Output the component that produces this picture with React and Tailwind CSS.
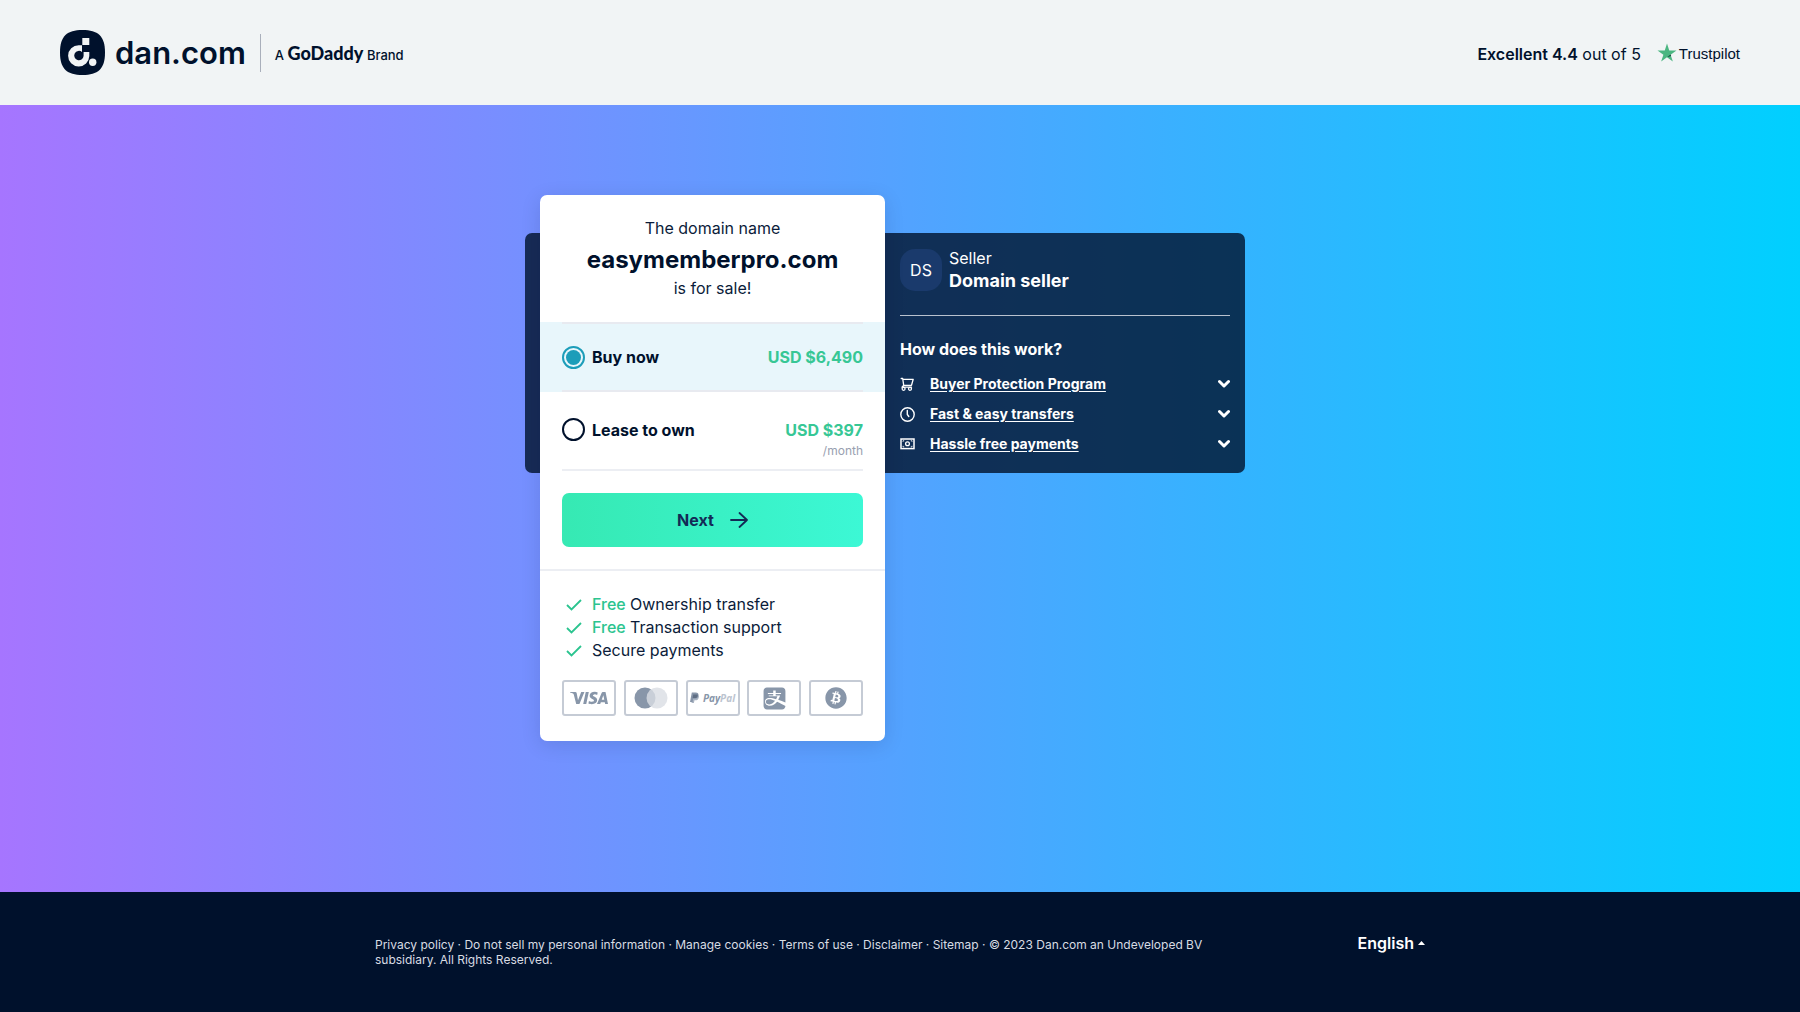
import { Fragment, useState } from "react";
import { FaAlipay, FaBitcoin } from "react-icons/fa6";
import { SiVisa } from "react-icons/si";

function DanMark() {
  return (
    <svg viewBox="0 0 45 45" className="size-[45px]" aria-hidden="true">
      <path
        d="M22.5 0C38 0 45 6 45 22.500C45 39 38 45 22.500 45C7 45 0 39 0 22.500C0 6 7 0 22.500 0Z"
        fill="#00112c"
      />
      <path d="M22 15.200V22A4.700 4.700 0 1 0 23.600 26V22H29.300V26A10.600 10.600 0 1 1 18.700 15.200Z" fill="#f1f4f5" />
      <path d="M22.300 8h7v7h-7z" fill="#f1f4f5" />
      <circle cx="32.700" cy="32.300" r="3.700" fill="#f1f4f5" />
    </svg>
  );
}

function Star() {
  return (
    <svg viewBox="0 0 20 20" className="size-[20px]" aria-hidden="true">
      <path d="M10 .5l2.250 6.900h7.250l-5.900 4.250 2.250 6.900L10 14.300l-5.850 4.250 2.250-6.900L.5 7.400h7.250z" fill="#4bb681" />
      <path d="M14.100 13.100l-.5-1.500-3.600 2.700z" fill="#17413f" />
    </svg>
  );
}

function Chevron() {
  return (
    <svg viewBox="0 0 12 10" className="w-3 h-[10px]" fill="none" stroke="currentColor" strokeWidth="3" strokeLinecap="round" strokeLinejoin="round" aria-hidden="true">
      <path d="M1.500 2.500l4.500 4.500 4.500-4.500" />
    </svg>
  );
}

function Cart() {
  return (
    <svg viewBox="0 0 15 15" className="size-[15px]" fill="none" stroke="currentColor" strokeWidth="1.300" strokeLinejoin="round" strokeLinecap="round" aria-hidden="true">
      <path d="M1.200 1.500h1.500l1 6.800h7.800l1.700-6H2.900M3.700 8.300L2 10.200h9.500" />
      <circle cx="3.600" cy="11.800" r="1.500" />
      <circle cx="10" cy="11.800" r="1.500" />
    </svg>
  );
}

function Clock() {
  return (
    <svg viewBox="0 0 15 15" className="size-[15px]" fill="none" stroke="currentColor" strokeWidth="1.400" strokeLinecap="round" aria-hidden="true">
      <circle cx="7.500" cy="7.500" r="6.700" />
      <path d="M7.300 3.500v4l1.500 2" />
    </svg>
  );
}

function Banknote() {
  return (
    <svg viewBox="0 0 15 15" className="size-[15px]" fill="none" stroke="currentColor" aria-hidden="true">
      <rect x="1" y="2" width="13" height="9.600" strokeWidth="1.500" />
      <circle cx="7.500" cy="6.800" r="1.900" strokeWidth="1.300" />
      <path d="M3 4.800V3.700h1.200M12 4.800V3.700h-1.200M3 8.800v1.100h1.200M12 8.800v1.100h-1.200" strokeWidth=".8" />
    </svg>
  );
}

function Check() {
  return (
    <svg viewBox="0 0 16 12" className="w-4 h-3" fill="none" stroke="#2bc48f" strokeWidth="1.800" aria-hidden="true">
      <path d="M1 6l4.500 4.500L15 1" />
    </svg>
  );
}

function Arrow() {
  return (
    <svg viewBox="0 0 18 16" className="w-[18px] h-4" fill="none" stroke="currentColor" strokeWidth="1.800" strokeLinecap="round" strokeLinejoin="round" aria-hidden="true">
      <path d="M1 8h16M9.500 1l7.500 7-7.500 7" />
    </svg>
  );
}

function PayPal() {
  return (
    <span className="flex items-center gap-1" aria-label="PayPal">
      <svg viewBox="0 0 9 12" className="w-[9px] h-3" aria-hidden="true">
        <path d="M1.800.5h3.900c2 0 3.100 1.200 2.800 3C8.200 5.600 6.800 6.700 4.800 6.700H3.200L2.600 10H0z" fill="#8896a9" />
        <path d="M3 3h4.500c1.300.4 1.600 1.300 1.300 2.400C8.400 7.400 7.200 8.200 5.400 8.200h-.9L3.900 11H1.500z" fill="#8896a9" opacity=".7" />
        <path d="M3.200 2.400h4.500c.3 2.200-.9 3.700-3 3.700H2.600z" fill="#5f6e84" />
      </svg>
      <span className="font-['Open_Sans'] text-[10px] leading-3 font-bold italic text-[#8896a9]">
        Pay<span className="text-[#bcc4cf]">Pal</span>
      </span>
    </span>
  );
}

const payments = [
  ["Visa", <SiVisa key="v" className="size-[38px]" />],
  [
    "Mastercard",
    <svg key="m" viewBox="0 0 34 22" className="w-[34px] h-[22px]" aria-hidden="true">
      <circle cx="11" cy="11" r="10.500" fill="#8896a9" />
      <circle cx="23" cy="11" r="10.500" fill="#d9dde3" opacity=".8" />
    </svg>,
  ],
  ["PayPal", <PayPal key="p" />],
  ["Alipay", <FaAlipay key="a" className="size-[25px]" />],
  ["Bitcoin", <FaBitcoin key="b" className="size-[22px]" />],
];

const topics = [
  ["Buyer Protection Program", Cart],
  ["Fast & easy transfers", Clock],
  ["Hassle free payments", Banknote],
];

const perks = [
  [true, "Ownership transfer"],
  [true, "Transaction support"],
  [false, "Secure payments"],
];

const legal = ["Privacy policy", "Do not sell my personal information", "Manage cookies", "Terms of use", "Disclaimer", "Sitemap"];

const radio =
  "appearance-none size-[23px] shrink-0 rounded-full border-2 border-[#00112c] p-[2px] bg-clip-content checked:border-[#1c9db9] checked:bg-[#1c9db9]";

export default function App() {
  const [plan, setPlan] = useState("buy");
  return (
    <div className="min-h-screen flex flex-col font-['Inter',sans-serif] text-base text-[#0b1c3a]">
      <header className="flex items-center justify-between bg-[#f1f4f5] px-[60px] py-[30px] text-[#00112c]">
        <div className="flex items-center">
          <a href="#home" className="flex items-center gap-[10px] pr-[14px]">
            <DanMark />
            <span className="text-[31px] leading-[45px] font-semibold">dan.com</span>
          </a>
          <div className="flex h-[38px] items-center border-l border-[#a9afbb] pl-[14px] text-[13px] font-medium">
            <span>
              A <b className="font-['Lato'] text-lg font-black">GoDaddy</b> Brand
            </span>
          </div>
        </div>
        <div className="flex items-center gap-4">
          <span className="pt-[3px]">
            <b className="font-semibold">Excellent 4.4</b> out of 5
          </span>
          <a href="#reviews" className="flex items-center gap-[2px] font-['Liberation_Sans'] text-[15px]">
            <Star />
            <span className="pt-1">Trustpilot</span>
          </a>
        </div>
      </header>

      <main className="flex grow justify-center bg-linear-to-r/srgb from-[#a675ff] to-[#00d0ff] pt-[90px] pb-[151px]">
        <div className="grid grid-cols-[15px_345px_360px] pr-[30px]">
          <div className="col-span-3 col-start-1 row-start-1 mt-[38px] self-start grid grid-cols-subgrid rounded-[7px] bg-[#00112c]/80">
            <section className="col-start-3 px-[15px] pt-4 pb-[14px] text-white">
              <div className="flex gap-[7px] border-b border-[#b9c2cf] pb-6">
                <div className="flex size-[42px] items-center justify-center rounded-[15px] bg-[#1a3a6c]">DS</div>
                <div className="-my-[2px]">
                  <div className="leading-[22px]">Seller</div>
                  <div className="text-lg leading-6 font-bold">Domain seller</div>
                </div>
              </div>
              <h2 className="pt-[21px] pb-2 leading-6 font-bold">How does this work?</h2>
              <ul>
                {topics.map(([label, Icon]) => (
                  <li key={label}>
                    <button type="button" className="flex h-[30px] w-full items-center text-left">
                      <Icon />
                      <span className="grow pl-[15px] text-sm font-bold underline underline-offset-2">{label}</span>
                      <Chevron />
                    </button>
                  </li>
                ))}
              </ul>
            </section>
          </div>

          <form className="col-start-2 row-start-1 rounded-[7px] bg-white shadow-[0_4px_20px_rgba(0,17,44,0.12)]" onSubmit={(e) => e.preventDefault()}>
            <div className="pt-[21px] pb-[26px] text-center">
              <p className="leading-6">The domain name</p>
              <h1 className="text-2xl leading-10 font-bold text-[#00112c]">easymemberpro.com</h1>
              <p className="leading-4">is for sale!</p>
            </div>

            <label className={plan === "buy" ? "block bg-[#e8f6fb] px-[22px]" : "block px-[22px]"}>
              <span className="flex h-[70px] items-center border-y-2 border-[#e8eaf0] font-bold text-[#00112c]">
                <input type="radio" name="plan" className={radio} checked={plan === "buy"} onChange={() => setPlan("buy")} />
                <span className="grow pl-[7px]">Buy now</span>
                <span className="text-[#37c795]">USD $6,490</span>
              </span>
            </label>
            <label className={plan === "lease" ? "block bg-[#e8f6fb] px-[22px]" : "block px-[22px]"}>
              <span className="flex h-[79px] items-start border-b-2 border-[#eceef3] pt-[26px] leading-6 font-bold text-[#00112c]">
                <input type="radio" name="plan" className={radio} checked={plan === "lease"} onChange={() => setPlan("lease")} />
                <span className="grow pl-[7px]">Lease to own</span>
                <span className="text-right text-[#37c795]">
                  USD $397
                  <span className="block text-xs leading-[18px] font-normal text-[#98a0b0]">/month</span>
                </span>
              </span>
            </label>

            <div className="border-b-2 border-[#eceef3] px-[22px] pt-[22px] pb-[22px]">
              <button type="submit" className="flex h-[54px] w-full items-center justify-center gap-4 rounded-[7px] bg-linear-to-r from-[#36e9b3] to-[#3cf8d5] font-bold text-[#132a55]">
                Next <Arrow />
              </button>
            </div>

            <div className="px-[22px] pt-[22px] pb-6">
              <ul className="leading-[23px] text-[#0b1c3a]">
                {perks.map(([free, text]) => (
                  <li key={text} className="flex items-center gap-[10px] pl-1">
                    <Check />
                    <span>
                      {free && <span className="font-medium text-[#2bc48f]">Free </span>}
                      {text}
                    </span>
                  </li>
                ))}
              </ul>
              <ul className="flex justify-between pt-[18px]">
                {payments.map(([name, icon]) => (
                  <li key={name} title={name} className="flex h-9 w-[54px] items-center justify-center overflow-hidden rounded-[3px] border-2 border-[#c5cbd5] text-[#8896a9]">
                    {icon}
                  </li>
                ))}
              </ul>
            </div>
          </form>
        </div>
      </main>

      <footer className="flex justify-center bg-[#00112c] pt-[42px] pb-[45px] text-white">
        <div className="flex w-full max-w-[1050px] items-start justify-between">
          <p className="max-w-[840px] pt-[3px] text-xs leading-[15px] text-[#d8dce3]">
            {legal.map((item) => (
              <Fragment key={item}>
                <a href="#legal">{item}</a>
                {" · "}
              </Fragment>
            ))}
            © 2023 Dan.com an Undeveloped BV subsidiary. All Rights Reserved.
          </p>
          <button type="button" className="flex items-center gap-1 leading-[18px] font-semibold">
            English
            <svg viewBox="0 0 7 4" className="h-1 w-[7px]" aria-hidden="true">
              <path d="M0 4L3.500 0 7 4z" fill="currentColor" />
            </svg>
          </button>
        </div>
      </footer>
    </div>
  );
}
